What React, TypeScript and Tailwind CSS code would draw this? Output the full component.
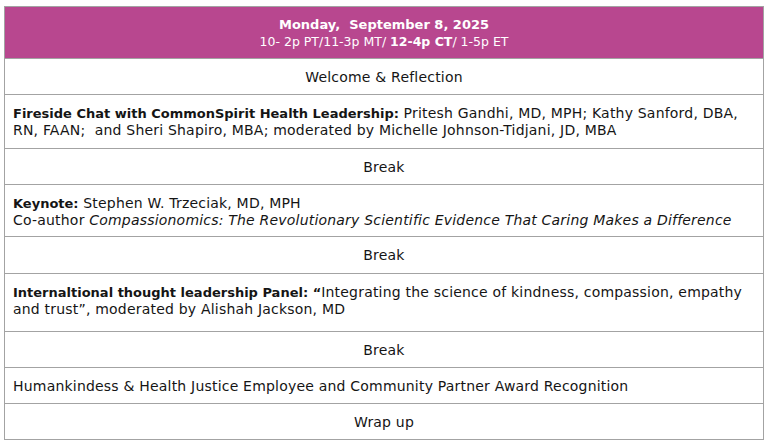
export default function App() {
  const font = { fontFamily: '"DejaVu Sans", sans-serif' };
  const row = "border-b border-[#a3a3a3]";
  return (
    <div className="min-h-screen bg-white pt-[6px] pl-[4px] pr-[4px] text-[#151515] text-[14px] tracking-[0.2px] leading-[16px]" style={font}>
      <div className="w-[760px] border border-[#a3a3a3]">
        {/* Header */}
        <div className={`bg-[#b8478f] text-white text-center pt-[9px] pb-[8px] tracking-normal ${row}`}>
          <p className="font-bold text-[13px] leading-[17px] whitespace-pre">Monday,  September 8, 2025</p>
          <p className="text-[12.5px] leading-[17px]">
            10- 2p PT/11-3p MT/ <b>12-4p CT</b>/ 1-5p ET
          </p>
        </div>

        <div className={`text-center pt-[10px] pb-[9px] ${row}`}>Welcome &amp; Reflection</div>

        <div className={`px-2 pt-[10px] pb-[10px] ${row}`}>
          <b className="text-[13px] tracking-normal">Fireside Chat with CommonSpirit Health Leadership:</b> Pritesh Gandhi, MD, MPH; Kathy Sanford, DBA,
          <br />
          RN, FAAN;&nbsp; and Sheri Shapiro, MBA; moderated by Michelle Johnson-Tidjani, JD, MBA
        </div>

        <div className={`text-center pt-[10px] pb-[9px] ${row}`}>Break</div>

        <div className={`px-2 pt-[10px] pb-[8px] ${row}`}>
          <b className="text-[13px] tracking-normal">Keynote:</b> Stephen W. Trzeciak, MD, MPH
          <br />
          Co-author <i>Compassionomics: The Revolutionary Scientific Evidence That Caring Makes a Difference</i>
        </div>

        <div className={`text-center pt-[10px] pb-[10px] ${row}`}>Break</div>

        <div className={`px-2 pt-[10px] pb-[14px] ${row}`}>
          <b className="text-[13px] tracking-normal">Internaltional thought leadership Panel: “</b>Integrating the science of kindness, compassion, empathy
          <br />
          and trust”, moderated by Alishah Jackson, MD
        </div>

        <div className={`text-center pt-[10px] pb-[9px] ${row}`}>Break</div>

        <div className={`px-2 pt-[10px] pb-[9px] ${row}`}>
          Humankindess &amp; Health Justice Employee and Community Partner Award Recognition
        </div>

        <div className="text-center pt-[10px] pb-[9px]">Wrap up</div>
      </div>
    </div>
  );
}
